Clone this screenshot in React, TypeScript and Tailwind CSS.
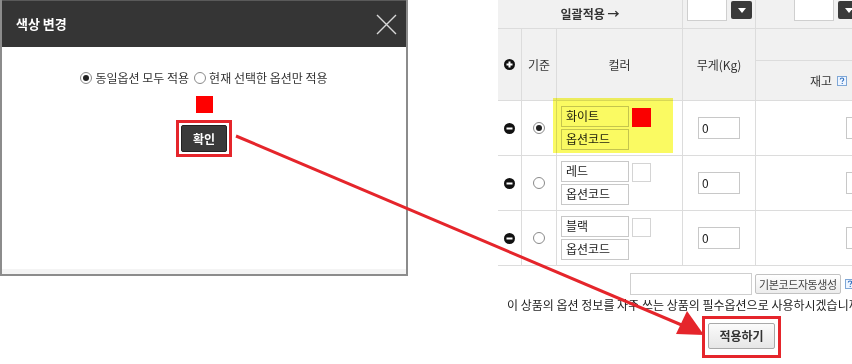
import React from "react";

const font = { fontFamily: '"Noto Sans CJK KR", "Noto Sans", sans-serif' };

function Radio({ checked }: { checked?: boolean }) {
  return (
    <span className="flex h-[12px] w-[12px] shrink-0 items-center justify-center rounded-full border border-[#8a8a8a] bg-white">
      {checked && <span className="h-[6px] w-[6px] rounded-full bg-[#222]" />}
    </span>
  );
}

function CircleIcon({ plus }: { plus?: boolean }) {
  return (
    <svg width="11" height="11" viewBox="0 0 11 11">
      <circle cx="5.5" cy="5.5" r="5.5" fill="#111" />
      <rect x="2.5" y="4.5" width="6" height="2" fill="#fff" />
      {plus && <rect x="4.5" y="2.5" width="2" height="6" fill="#fff" />}
    </svg>
  );
}

function DropBtn() {
  return (
    <span className="flex h-[18px] w-[21px] items-center justify-center rounded-[2px] bg-[#3a3a3a]">
      <svg width="8" height="5" viewBox="0 0 8 5">
        <path d="M0 0h8L4 5z" fill="#fff" />
      </svg>
    </span>
  );
}

// small "?" help badge
function Help() {
  return (
    <svg width="10" height="10" viewBox="0 0 10 10" className="shrink-0">
      <rect x="0.5" y="0.5" width="9" height="9" fill="#eef5ff" stroke="#7fa7d6" />
      <path d="M3.3 3.6c0-1 .8-1.6 1.7-1.6s1.7.6 1.7 1.5c0 1.1-1.4 1.2-1.4 2.3" fill="none" stroke="#2f6fc0" strokeWidth="1.1" />
      <rect x="4.7" y="6.9" width="1.1" height="1.1" fill="#2f6fc0" />
    </svg>
  );
}

type Row = { name: string; color?: string; checked?: boolean; hl?: boolean };

const rows: Row[] = [
  { name: "화이트", color: "#ff0000", checked: true, hl: true },
  { name: "레드" },
  { name: "블랙" },
];

export default function App() {
  return (
    <div
      className="relative flex h-[364px] w-[852px] items-start overflow-hidden bg-white text-[12px] text-[#222]"
      style={font}
    >
      {/* Modal */}
      <div className="flex h-[276px] w-[408px] shrink-0 flex-col border-r-2 border-b-2 border-l-2 border-[#8c8c8c] bg-white">
        <div className="flex h-[47px] shrink-0 items-center justify-between border-t border-[#5a5a5a] bg-[#353535] pr-[9px] pl-[14px]">
          <span className="text-[13px] font-bold text-white">색상 변경</span>
          <svg width="21" height="21" viewBox="0 0 21 21">
            <path d="M1 1L20 20M20 1L1 20" stroke="#d8d8d8" strokeWidth="1.4" />
          </svg>
        </div>
        <div className="flex flex-1 flex-col items-center pt-[22px]">
          <div className="flex items-center gap-[3px] text-[#333]">
            <Radio checked />
            <span className="mr-[2px]">동일옵션 모두 적용</span>
            <Radio />
            <span>현재 선택한 옵션만 적용</span>
          </div>
          <span className="mt-[9px] h-[17px] w-[17px] bg-[#ff0000]" />
          <div className="mt-[7px] border-[3px] border-[#e5252b] p-[2px]">
            <button className="flex h-[27px] w-[46px] items-center justify-center rounded-[2px] border border-[#222] bg-[#3a3a3a] text-[12px] font-bold text-white">
              확인
            </button>
          </div>
        </div>
        <div className="h-[5px] shrink-0 bg-[#f4f4f4]" />
      </div>

      {/* Option table */}
      <div className="ml-[90px] w-[420px] shrink-0">
        <div className="flex h-[29px] border-b border-[#dcdcdc] bg-[#f1f1f1]">
          <div className="flex w-[185px] items-center justify-center border-r border-[#dcdcdc] font-bold text-[#333]">
            일괄적용 →
          </div>
          <div className="flex w-[73px] items-start gap-[4px] border-r border-[#dcdcdc] pl-[4px]">
            <span className="-mt-[2px] h-[23px] w-[40px] border border-[#cfcfcf] bg-white" />
            <span className="mt-[1px]">
              <DropBtn />
            </span>
          </div>
          <div className="flex flex-1 items-start gap-[4px] pl-[38px]">
            <span className="-mt-[2px] h-[23px] w-[40px] border border-[#cfcfcf] bg-white" />
            <span className="mt-[1px]">
              <DropBtn />
            </span>
          </div>
        </div>

        <div className="flex h-[72px] border-b border-[#dcdcdc] bg-[#f1f1f1] text-[#333]">
          <div className="flex w-[24px] items-center justify-center border-r border-[#dcdcdc]">
            <CircleIcon plus />
          </div>
          <div className="flex w-[35px] items-center justify-center border-r border-[#dcdcdc]">
            기준
          </div>
          <div className="flex w-[126px] items-center justify-center border-r border-[#dcdcdc]">
            컬러
          </div>
          <div className="flex w-[73px] items-center justify-center border-r border-[#dcdcdc]">
            무게(Kg)
          </div>
          <div className="flex flex-1 flex-col">
            <div className="h-[32px] border-b border-[#dcdcdc]" />
            <div className="flex flex-1 items-center gap-[5px] pl-[54px]">
              재고 <Help />
            </div>
          </div>
        </div>

        {rows.map((r) => (
          <div key={r.name} className="relative flex h-[55px] border-b border-[#dcdcdc]">
            <div className="flex w-[24px] items-center justify-center border-r border-[#dcdcdc]">
              <CircleIcon />
            </div>
            <div className="flex w-[35px] items-center justify-center border-r border-[#dcdcdc]">
              <Radio checked={r.checked} />
            </div>
            <div className="flex w-[126px] items-center border-r border-[#dcdcdc] pl-[4px]">
              <div className="flex flex-col gap-[2px]">
                <span className="h-[21px] w-[68px] border border-[#c8c8c8] px-[4px] leading-[18px]">
                  {r.name}
                </span>
                <span className="h-[21px] w-[68px] border border-[#c8c8c8] px-[4px] leading-[18px]">
                  옵션코드
                </span>
              </div>
              <span
                className={`mb-[21px] ml-[3px] h-[19px] w-[19px] border ${
                  r.color ? "border-[#ff0000] bg-[#ff0000]" : "border-[#d4d4d4] bg-white"
                }`}
              />
            </div>
            <div className="flex w-[73px] items-center border-r border-[#dcdcdc] pl-[15px]">
              <span className="h-[22px] w-[42px] border border-[#c8c8c8] px-[3px] leading-[20px]">0</span>
            </div>
            <div className="flex flex-1 items-center pl-[90px]">
              <span className="h-[22px] w-[42px] border border-[#c8c8c8]" />
            </div>
            {r.hl && (
              <div className="pointer-events-none absolute top-[-3px] left-[55px] h-[55px] w-[120px] bg-[#fafa62] mix-blend-multiply" />
            )}
          </div>
        ))}

        <div className="mt-[7px] flex items-center pl-[132px]">
          <span className="h-[22px] w-[122px] border border-[#cfcfcf]" />
          <button className="ml-[3px] flex h-[20px] items-center rounded-[2px] border border-[#c2c2c2] bg-gradient-to-b from-white to-[#ececec] px-[3px] text-[11px] tracking-[-0.4px] text-[#444]">
            기본코드자동생성
          </button>
          <span className="ml-[4px]">
            <Help />
          </span>
        </div>
        <div className="mt-[2px] pl-[9px] leading-[15px] whitespace-nowrap text-[#222]">
          이 상품의 옵션 정보를 자주 쓰는 상품의 필수옵션으로 사용하시겠습니까?
        </div>
        <div className="mt-[4px] pl-[204px]">
          <div className="inline-flex border-[3px] border-[#e5252b] px-[3px] pt-[4px] pb-[6px]">
            <button className="flex h-[26px] w-[67px] items-center justify-center rounded-[2px] border border-[#a9a9a9] bg-gradient-to-b from-[#fbfbfb] to-[#e6e6e6] text-[12px] font-bold text-[#333]">
              적용하기
            </button>
          </div>
        </div>
      </div>

      {/* Annotation arrow */}
      <svg className="pointer-events-none absolute top-0 left-0" width="852" height="364">
        <line x1="236" y1="136" x2="684" y2="326" stroke="#e5252b" strokeWidth="3" />
        <polygon points="704,335 676,334 687,311" fill="#e5252b" />
      </svg>
    </div>
  );
}
